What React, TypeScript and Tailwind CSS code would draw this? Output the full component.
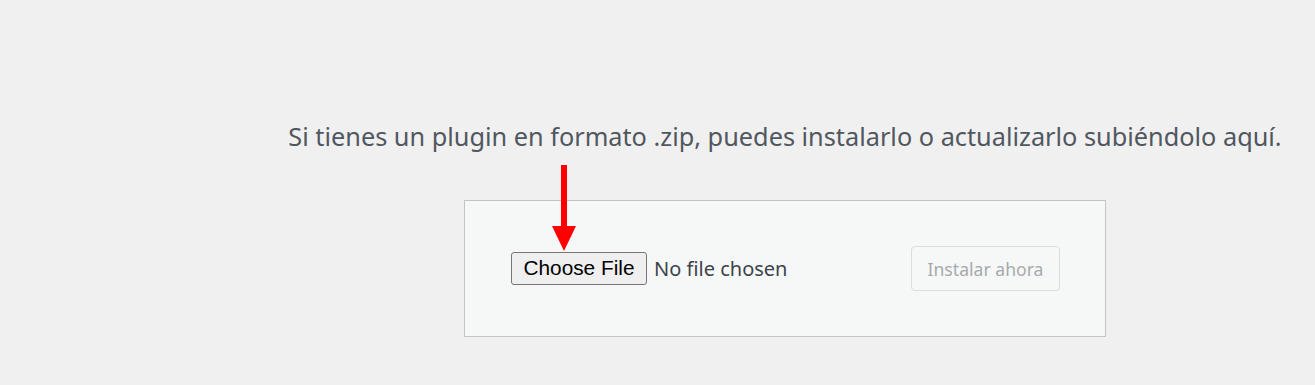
export default function App() {
  return (
    <div className="w-[1315px] h-[385px] bg-[#f0f0f1] overflow-hidden" style={{ fontFamily: '"Noto Sans", "Open Sans", sans-serif' }}>
      <div className="pl-[255px] pt-[115px] flex flex-col items-center">
        <p className="text-[25.3px] leading-[42px] text-[#50575e] whitespace-nowrap">
          Si tienes un plugin en formato .zip, puedes instalarlo o actualizarlo subiéndolo aquí.
        </p>
        <div className="relative mt-[43px] w-[642px] h-[137px] border border-[#c3c4c7] bg-[#f6f7f7] flex items-center justify-between pl-[46px] pr-[45px]">
          <div className="flex items-center">
            <button className="h-[33px] w-[136px] border border-[#767676] rounded-[3px] bg-[#efefef] text-black text-[20.8px] leading-none" style={{ fontFamily: '"Liberation Sans", Arial, sans-serif' }}>
              Choose File
            </button>
            <span className="ml-[7px] text-[20px] text-[#3c434a]">No file chosen</span>
          </div>
          <div className="h-[45px] w-[149px] border border-[#dcdcde] rounded-[4px] bg-[#f6f7f7] text-[#a7aaad] text-[17.6px] pt-[2px] flex items-center justify-center">
            Instalar ahora
          </div>
          <svg className="absolute left-[87px] top-[-36px]" width="26" height="86" viewBox="0 0 26 86">
            <rect x="9" y="0" width="6" height="64" fill="#ff0000" />
            <polygon points="0,61 24,61 12,86" fill="#ff0000" />
          </svg>
        </div>
      </div>
    </div>
  );
}
